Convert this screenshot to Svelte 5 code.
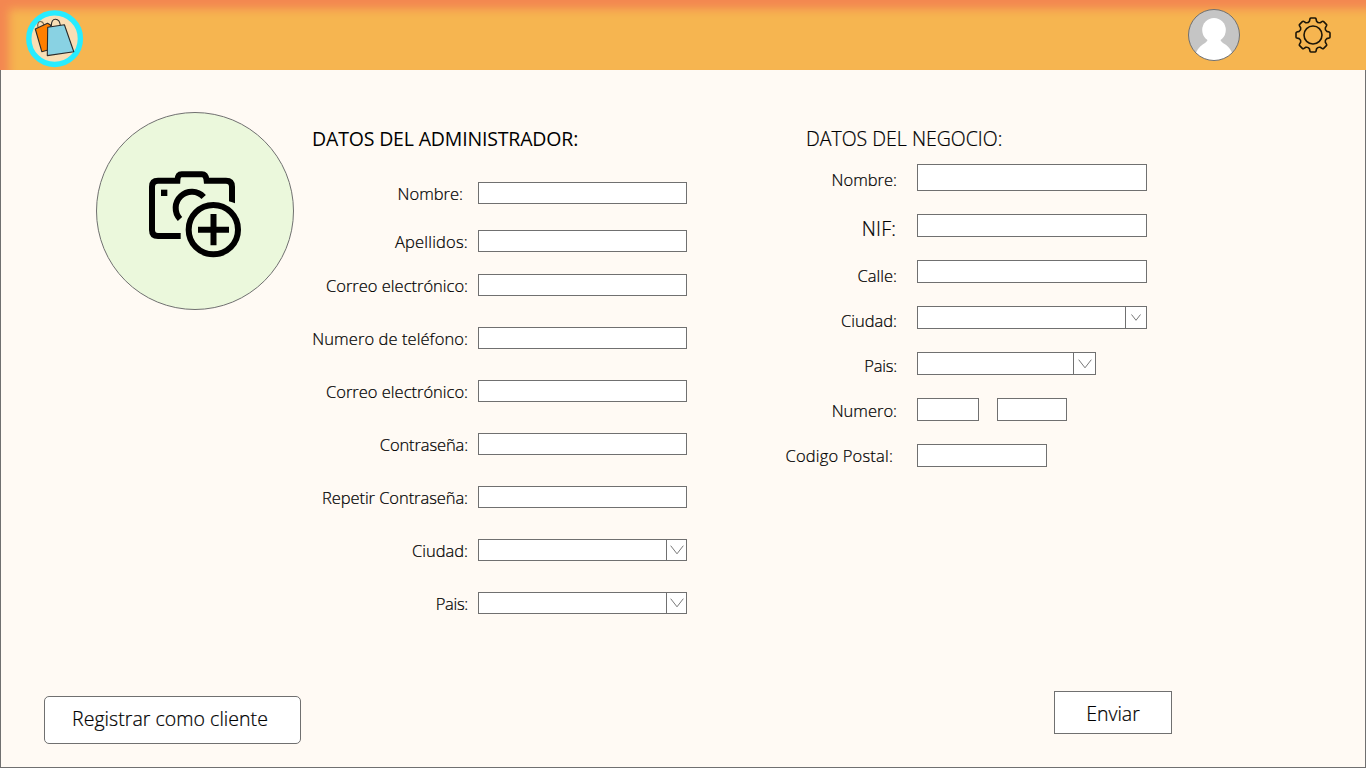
<script>
  const adminRows = [
    { label: 'Nombre:', gap: 0, end: 15 },
    { label: 'Apellidos:', gap: 26, track: 0.2 },
    { label: 'Correo electrónico:', gap: 22 },
    { label: 'Numero de teléfono:', gap: 31, track: 0.08 },
    { label: 'Correo electrónico:', gap: 31 },
    { label: 'Contraseña:', gap: 31, track: -0.12 },
    { label: 'Repetir Contraseña:', gap: 31, track: -0.06 },
    { label: 'Ciudad:', gap: 31, select: true },
    { label: 'Pais:', gap: 31, select: true, track: -0.3 },
  ];

  const businessRows = [
    { label: 'Nombre:', gap: 0, drop: 4, fields: [{ w: 230, h: 27 }] },
    { label: 'NIF:', gap: 23, drop: 3, end: 21, big: true, track: 0.2, fields: [{ w: 230 }] },
    { label: 'Calle:', gap: 23, drop: 4, fields: [{ w: 230 }] },
    { label: 'Ciudad:', gap: 23, drop: 3, fields: [{ w: 230, arrow: 21, size: 10 }] },
    { label: 'Pais:', gap: 23, drop: 2, track: -0.2, fields: [{ w: 179, arrow: 22, size: 14 }] },
    { label: 'Numero:', gap: 23, drop: 1, fields: [{ w: 62 }, { w: 70 }] },
    { label: 'Codigo Postal:', gap: 23, drop: 0, end: 24, track: 0.18, fields: [{ w: 130 }] },
  ];

  const teeth = [0, 45, 90, 135, 180, 225, 270, 315];
  const spin = (x, y, deg) => {
    const a = (deg * Math.PI) / 180;
    return `${(x * Math.cos(a) - y * Math.sin(a)).toFixed(2)} ${(x * Math.sin(a) + y * Math.cos(a)).toFixed(2)}`;
  };
  const gear =
    teeth
      .map(
        (t, i) =>
          `${i ? 'L' : 'M'}${spin(-3.6, -13.8, t)}L${spin(-3, -16.2, t)}Q${spin(-2.8, -17, t)} ${spin(-1.9, -17, t)}L${spin(1.9, -17, t)}Q${spin(2.8, -17, t)} ${spin(3, -16.2, t)}L${spin(3.6, -13.8, t)}Q${spin(4.9, -11.8, t)} ${spin(-3.6, -13.8, t + 45)}`
      )
      .join('') + 'Z';
</script>

{#snippet chevron(size)}
  <svg width={size} height={size * 0.7} viewBox="0 0 14 9.8" fill="none">
    <path d="M.7 .7 7 8.8 13.3 .7" stroke="#777" stroke-width={14 / size} />
  </svg>
{/snippet}

<div class="page">
  <header>
    <svg class="logo" width="58" height="58" viewBox="26 10 58 58">
      <circle cx="54.6" cy="38.7" r="25.8" fill="#f9deb5" stroke="#28ecff" stroke-width="5.4" />
      <g stroke="#2a2a2a" stroke-width="1.1" stroke-linejoin="round">
        <path d="M38 27.5C37 23 39 21 41.2 21.6 43 22 43.6 23.5 43.9 25.5" fill="none" stroke="#7b6a50" />
        <path d="M35.3 29 47.5 23.2 50.5 25 48 50 41.8 51.7Z" fill="#ff7f00" />
        <path d="M47.7 27.2 64.4 24.8 73.8 51.8 47.3 55.6Z" fill="#89d2e3" />
        <path d="M51.3 26.5C51 21.5 53 19.2 55.5 19.3 58.3 19.4 60 22 60.3 25.3" fill="none" />
      </g>
    </svg>
    <div class="tools">
      <svg width="52" height="52" viewBox="0 0 52 52">
        <clipPath id="face"><circle cx="26" cy="26" r="25.5" /></clipPath>
        <circle cx="26" cy="26" r="25.5" fill="#c5c5c5" />
        <g clip-path="url(#face)" fill="#fff">
          <ellipse cx="26" cy="21" rx="11.8" ry="12" />
          <path d="M20 29H32C32 32 34 33.5 37 35.2 41 37.6 44 42 45 47L40 53H12L7 47C8 42 11 37.6 15 35.2 18 33.5 20 32 20 29Z" />
        </g>
        <circle cx="26" cy="26" r="25.5" fill="none" stroke="#707070" />
      </svg>
      <svg width="38" height="38" viewBox="-19 -19 38 38" fill="none" stroke="#1d1608" stroke-width="1.6">
        <path d={gear} stroke-linejoin="round" />
        <circle r="9" />
      </svg>
    </div>
  </header>

  <main>
    <div class="columns">
      <button class="photo" aria-label="Foto">
        <svg width="92" height="87" viewBox="177 197 276 261" fill="none" stroke="#000" stroke-width="18">
          <path d="M272 392H204Q186 392 186 374V244Q186 226 204 226H262Q263 207 275 207H336Q348 207 350 226H408Q426 226 426 244V288" />
          <path d="M418 282V288L435 294V282Z" fill="#000" stroke="none" />
          <path d="M341 275A46 46 0 0 0 270 341" />
          <path d="M213 253H232V272H213Z" fill="#000" stroke="none" />
          <circle cx="370" cy="373" r="74" />
          <path d="M324 373H417M370.500 326V420" />
        </svg>
      </button>

      <section class="admin">
        <h2>DATOS DEL ADMINISTRADOR:</h2>
        {#each adminRows as row}
          <div class="row" style:margin-top="{row.gap}px">
            <span
              class="label"
              style:padding-right="{row.end ?? 10}px"
              style:letter-spacing="{row.track ?? 0}px">{row.label}</span>
            <div class="box">
              {#if row.select}<span class="arrow">{@render chevron(14)}</span>{/if}
            </div>
          </div>
        {/each}
      </section>

      <section class="business">
        <h2>DATOS DEL NEGOCIO:</h2>
        {#each businessRows as row}
          <div class="row" style:margin-top="{row.gap}px">
            <span
              class="label"
              class:big={row.big}
              style:padding-right="{row.end ?? 20}px"
              style:letter-spacing="{row.track ?? 0}px"
              style:padding-top="{row.drop + 1}px">{row.label}</span>
            <div class="group">
              {#each row.fields as f}
                <div class="box" style:width="{f.w}px" style:height="{f.h ?? 23}px">
                  {#if f.arrow}<span class="arrow" style:width="{f.arrow}px">{@render chevron(f.size)}</span>{/if}
                </div>
              {/each}
            </div>
          </div>
        {/each}
      </section>
    </div>

    <footer>
      <button class="client">Registrar como cliente</button>
      <button class="send">Enviar</button>
    </footer>
  </main>
</div>

<style>
  :global(body) {
    margin: 0;
  }
  .page {
    width: 1366px;
    height: 768px;
    display: flex;
    flex-direction: column;
    overflow: hidden;
    background: #fffaf4;
    color: #000;
    font-family: 'Open Sans', 'Noto Sans', sans-serif;
    font-weight: 300;
    -webkit-text-stroke: 0.22px #000;
  }
  .page * {
    box-sizing: border-box;
  }
  svg {
    display: block;
  }
  header {
    height: 70px;
    flex: none;
    display: flex;
    justify-content: space-between;
    align-items: flex-start;
    padding: 9px 34px 0 26px;
    background: #f6b550;
    box-shadow: inset 9px 9px 10px #f38751;
  }
  .logo {
    margin-top: 1px;
  }
  .tools {
    display: flex;
    align-items: center;
    gap: 54px;
  }
  main {
    flex: 1;
    display: flex;
    flex-direction: column;
    justify-content: space-between;
    border: 1px solid #707070;
    border-top: 0;
  }
  .columns {
    display: flex;
    align-items: flex-start;
    padding-left: 95px;
  }
  button {
    font: inherit;
    color: inherit;
    border: 1px solid #707070;
    background: #fff;
    padding: 0;
  }
  .photo {
    width: 198px;
    height: 198px;
    margin-top: 42px;
    border-radius: 50%;
    background: #ebf8dc;
    display: flex;
    align-items: center;
    justify-content: center;
    padding: 6px 0 0 0;
  }
  h2 {
    margin: 0;
    font-size: 19.5px;
    line-height: 26px;
    font-weight: 300;
    white-space: nowrap;
  }
  .admin {
    width: 393px;
    padding-top: 56px;
  }
  .admin h2 {
    font-weight: 400;
    padding-left: 18px;
    margin-bottom: 30px;
    letter-spacing: -0.17px;
    -webkit-text-stroke: 0;
  }
  .row {
    display: flex;
    align-items: flex-start;
  }
  .label {
    width: 184px;
    height: 22px;
    padding-top: 1px;
    text-align: right;
    font-size: 16.5px;
    line-height: 22px;
    white-space: nowrap;
  }
  .box {
    width: 209px;
    height: 22px;
    flex: none;
    display: flex;
    justify-content: flex-end;
    background: #fff;
    border: 1px solid #707070;
  }
  .arrow {
    width: 20px;
    display: flex;
    align-items: center;
    justify-content: center;
    border-left: 1px solid #707070;
  }
  .business {
    width: 460px;
    padding-top: 56px;
  }
  .business h2 {
    padding-left: 119px;
    margin-bottom: 12px;
  }
  .business .label {
    width: 230px;
  }
  .label.big {
    font-size: 19.5px;
  }
  .group {
    display: flex;
    gap: 18px;
  }
  footer {
    display: flex;
    justify-content: space-between;
    align-items: flex-start;
    padding: 0 193px 23px 43px;
    font-size: 19.5px;
  }
  .client {
    width: 257px;
    height: 48px;
    margin-top: 5px;
    border-radius: 5px;
    padding: 0 5px 4px 0;
    letter-spacing: 0.04px;
  }
  .send {
    width: 118px;
    height: 43px;
    padding-top: 2px;
  }
</style>
